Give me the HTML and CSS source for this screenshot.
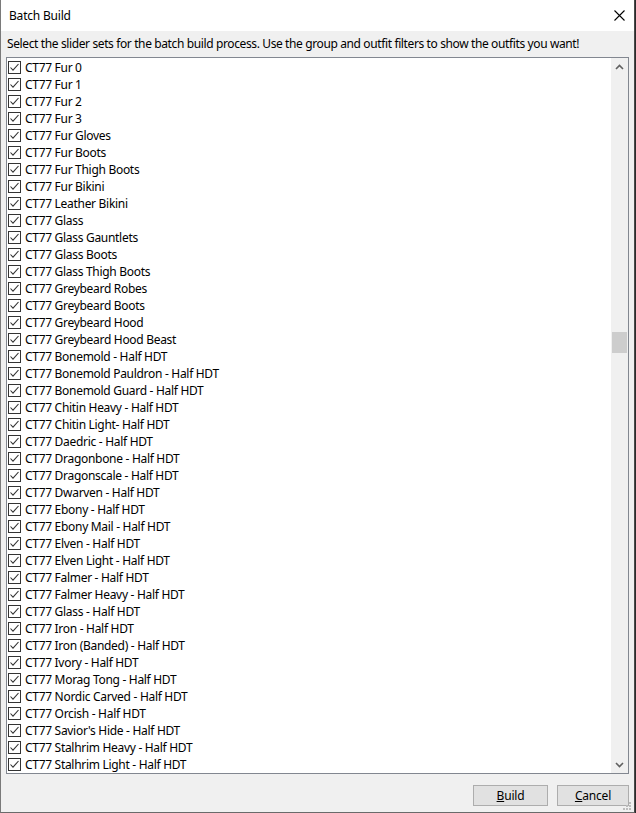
FILE: index.html
```html
<!DOCTYPE html>
<html>
<head>
<meta charset="utf-8">
<link rel="stylesheet" href="styles.css">
</head>
<body>
<div class="window">
  <div class="titlebar">
    <span class="title">Batch Build</span>
    <span class="close"><svg width="11" height="11" viewBox="0 0 11 11"><path d="M0.5 0.5 L10.5 10.5 M10.5 0.5 L0.5 10.5" stroke="#000" stroke-width="1.1" fill="none"/></svg></span>
  </div>
  <div class="content">
    <div class="instr">Select the slider sets for the batch build process. Use the group and outfit filters to show the outfits you want!</div>
    <div class="listbox">
      <div class="items" id="items">
        <div class="row"><span class="cb"></span>CT77 Fur 0</div>
        <div class="row"><span class="cb"></span>CT77 Fur 1</div>
        <div class="row"><span class="cb"></span>CT77 Fur 2</div>
        <div class="row"><span class="cb"></span>CT77 Fur 3</div>
        <div class="row"><span class="cb"></span>CT77 Fur Gloves</div>
        <div class="row"><span class="cb"></span>CT77 Fur Boots</div>
        <div class="row"><span class="cb"></span>CT77 Fur Thigh Boots</div>
        <div class="row"><span class="cb"></span>CT77 Fur Bikini</div>
        <div class="row"><span class="cb"></span>CT77 Leather Bikini</div>
        <div class="row"><span class="cb"></span>CT77 Glass</div>
        <div class="row"><span class="cb"></span>CT77 Glass Gauntlets</div>
        <div class="row"><span class="cb"></span>CT77 Glass Boots</div>
        <div class="row"><span class="cb"></span>CT77 Glass Thigh Boots</div>
        <div class="row"><span class="cb"></span>CT77 Greybeard Robes</div>
        <div class="row"><span class="cb"></span>CT77 Greybeard Boots</div>
        <div class="row"><span class="cb"></span>CT77 Greybeard Hood</div>
        <div class="row"><span class="cb"></span>CT77 Greybeard Hood Beast</div>
        <div class="row"><span class="cb"></span>CT77 Bonemold - Half HDT</div>
        <div class="row"><span class="cb"></span>CT77 Bonemold Pauldron - Half HDT</div>
        <div class="row"><span class="cb"></span>CT77 Bonemold Guard - Half HDT</div>
        <div class="row"><span class="cb"></span>CT77 Chitin Heavy - Half HDT</div>
        <div class="row"><span class="cb"></span>CT77 Chitin Light- Half HDT</div>
        <div class="row"><span class="cb"></span>CT77 Daedric - Half HDT</div>
        <div class="row"><span class="cb"></span>CT77 Dragonbone - Half HDT</div>
        <div class="row"><span class="cb"></span>CT77 Dragonscale - Half HDT</div>
        <div class="row"><span class="cb"></span>CT77 Dwarven - Half HDT</div>
        <div class="row"><span class="cb"></span>CT77 Ebony - Half HDT</div>
        <div class="row"><span class="cb"></span>CT77 Ebony Mail - Half HDT</div>
        <div class="row"><span class="cb"></span>CT77 Elven - Half HDT</div>
        <div class="row"><span class="cb"></span>CT77 Elven Light - Half HDT</div>
        <div class="row"><span class="cb"></span>CT77 Falmer - Half HDT</div>
        <div class="row"><span class="cb"></span>CT77 Falmer Heavy - Half HDT</div>
        <div class="row"><span class="cb"></span>CT77 Glass - Half HDT</div>
        <div class="row"><span class="cb"></span>CT77 Iron - Half HDT</div>
        <div class="row"><span class="cb"></span>CT77 Iron (Banded) - Half HDT</div>
        <div class="row"><span class="cb"></span>CT77 Ivory - Half HDT</div>
        <div class="row"><span class="cb"></span>CT77 Morag Tong - Half HDT</div>
        <div class="row"><span class="cb"></span>CT77 Nordic Carved - Half HDT</div>
        <div class="row"><span class="cb"></span>CT77 Orcish - Half HDT</div>
        <div class="row"><span class="cb"></span>CT77 Savior's Hide - Half HDT</div>
        <div class="row"><span class="cb"></span>CT77 Stalhrim Heavy - Half HDT</div>
        <div class="row"><span class="cb"></span>CT77 Stalhrim Light - Half HDT</div>
      </div>
      <div class="scrollbar">
        <div class="arrow"><svg width="9" height="6" viewBox="0 0 9 6"><path d="M1 5 L4.5 1.5 L8 5" stroke="#606060" stroke-width="1.6" fill="none"/></svg></div>
        <div class="track-top"></div>
        <div class="thumb"></div>
        <div class="track-rest"></div>
        <div class="arrow"><svg width="9" height="6" viewBox="0 0 9 6"><path d="M1 1 L4.5 4.5 L8 1" stroke="#606060" stroke-width="1.6" fill="none"/></svg></div>
      </div>
    </div>
    <div class="buttons">
      <button class="btn btn-build"><u>B</u>uild</button>
      <button class="btn btn-cancel"><u>C</u>ancel</button>
    </div>
  </div>
  <svg class="grip" width="9" height="9" viewBox="0 0 9 9">
    <rect x="6" y="0" width="2" height="2" fill="#bcbcbc"/>
    <rect x="3" y="3" width="2" height="2" fill="#bcbcbc"/>
    <rect x="6" y="3" width="2" height="2" fill="#bcbcbc"/>
    <rect x="0" y="6" width="2" height="2" fill="#bcbcbc"/>
    <rect x="3" y="6" width="2" height="2" fill="#bcbcbc"/>
    <rect x="6" y="6" width="2" height="2" fill="#bcbcbc"/>
  </svg>
</div>
</body>
</html>
```

FILE: styles.css
```css
html, body {
  margin: 0;
  padding: 0;
  background: #2b2b2b;
}
body {
  font-family: "Noto Sans", "Open Sans", sans-serif;
  font-size: 12px;
  color: #000;
}
.window {
  position: relative;
  width: 635px;
  height: 813px;
  box-sizing: border-box;
  border-left: 1px solid #7a7a7a;
  border-right: 1px solid #4a4a4a;
  border-bottom: 1px solid #6a6a6a;
  background: #f0f0f0;
  display: flex;
  flex-direction: column;
}
.titlebar {
  height: 31px;
  background: #fff;
  display: flex;
  align-items: center;
  justify-content: space-between;
  padding-left: 8px;
  flex-shrink: 0;
}
.title {
  font-size: 12px;
  line-height: 16px;
  letter-spacing: -0.2px;
}
.close {
  width: 30px;
  display: flex;
  justify-content: center;
}
.content {
  flex: 1;
  display: flex;
  flex-direction: column;
  padding: 0 5px;
}
.instr {
  height: 26px;
  line-height: 26px;
  padding-left: 1px;
  white-space: nowrap;
  letter-spacing: -0.38px;
}
.listbox {
  height: 717px;
  box-sizing: border-box;
  border: 1px solid #828790;
  background: #fff;
  display: flex;
  overflow: hidden;
}
.items {
  flex: 1;
  display: flex;
  flex-direction: column;
  overflow: hidden;
  padding-top: 1px;
}
.row {
  height: 17px;
  line-height: 17px;
  display: flex;
  align-items: center;
  white-space: nowrap;
  padding-left: 1px;
  letter-spacing: -0.3px;
  flex-shrink: 0;
}
.cb {
  width: 13px;
  height: 13px;
  box-sizing: border-box;
  border: 1px solid #333;
  background: #fff url("data:image/svg+xml;utf8,<svg xmlns='http://www.w3.org/2000/svg' width='11' height='11' viewBox='0 0 11 11'><path d='M1.5 5.5 L4 8.2 L9.5 2' stroke='%23333' stroke-width='1.1' fill='none'/></svg>") no-repeat center;
  margin-right: 4px;
  flex-shrink: 0;
}
.scrollbar {
  width: 17px;
  background: #f0f0f0;
  display: flex;
  flex-direction: column;
  flex-shrink: 0;
}
.arrow {
  height: 17px;
  display: flex;
  align-items: center;
  justify-content: center;
  flex-shrink: 0;
}
.track-top {
  height: 257px;
  flex-shrink: 0;
}
.thumb {
  height: 21px;
  margin: 0 1px;
  background: #cdcdcd;
  flex-shrink: 0;
}
.track-rest {
  flex: 1;
}
.buttons {
  flex: 1;
  display: flex;
  justify-content: flex-end;
  align-items: flex-start;
  padding-top: 11px;
  padding-right: 0;
  gap: 9px;
}
.btn {
  height: 21px;
  box-sizing: border-box;
  border: 1px solid #adadad;
  background: #e1e1e1;
  font-family: "Noto Sans", "Open Sans", sans-serif;
  font-size: 12px;
  color: #000;
  padding: 0;
  line-height: 18px;
  letter-spacing: -0.2px;
}
.btn-build { width: 75px; }
.btn-cancel { width: 72px; }
.grip {
  position: absolute;
  right: 2px;
  bottom: 1px;
}
```
